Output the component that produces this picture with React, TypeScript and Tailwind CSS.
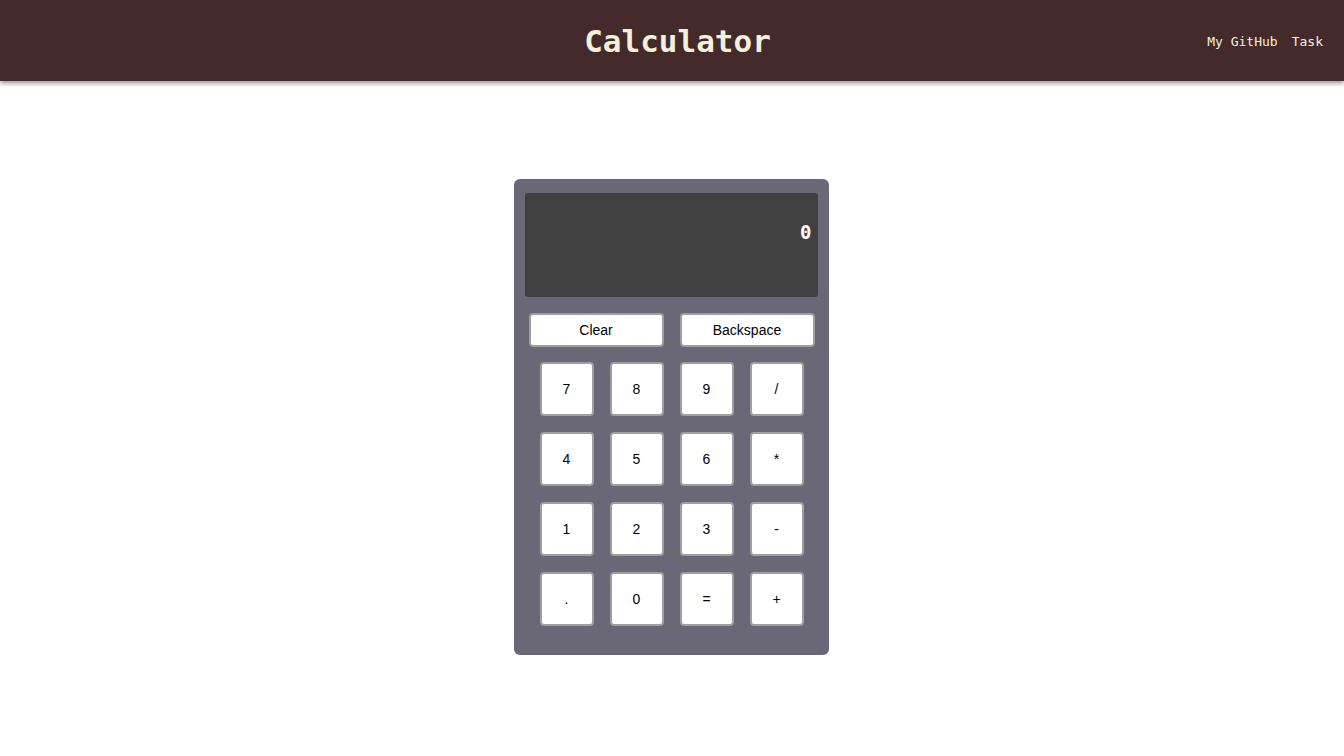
import React from "react";

const keys = ["7", "8", "9", "/", "4", "5", "6", "*", "1", "2", "3", "-", ".", "0", "=", "+"];

export default function App() {
  return (
    <div className="min-h-screen bg-white">
      <header className="relative h-[81px] bg-[#442a2a] shadow-[0_2px_5px_rgba(0,0,0,0.45)] flex items-center justify-center">
        <h1 className="pl-[11px] pt-[1px] text-[31px] font-bold text-[#f3f1dc] font-['DejaVu_Sans_Mono',monospace] leading-none">Calculator</h1>
        <nav className="absolute right-[21px] top-0 h-full flex items-center pt-[2px] gap-[14px] text-[13px] text-[#f3f1dc] font-['DejaVu_Sans_Mono',monospace]">
          <span>My GitHub</span>
          <span>Task</span>
        </nav>
      </header>
      <main className="flex justify-center pt-[98px] pr-[2px]">
        <div className="w-[315px] h-[476px] rounded-[6px] bg-[#6a6877] pt-[14px] px-[11px] pb-[29px]">
          <div className="h-[104px] rounded-[3px] bg-[#404040] flex justify-end pt-[27px] pr-[6px]">
            <span className="text-white font-bold text-[19px] leading-[24px] font-['DejaVu_Sans_Mono',monospace]">0</span>
          </div>
          <div className="mt-[16px] pl-[4px] flex gap-[16px]">
            <button className="w-[135px] h-[34px] pt-[1px] bg-white border-2 border-[#9f9f9f] rounded-[4px] text-[14px] text-black font-['Liberation_Sans',Arial,sans-serif]">Clear</button>
            <button className="w-[135px] h-[34px] pt-[1px] bg-white border-2 border-[#9f9f9f] rounded-[4px] text-[14px] text-black font-['Liberation_Sans',Arial,sans-serif]">Backspace</button>
          </div>
          <div className="mt-[15px] pl-[15px] grid grid-cols-[repeat(4,54px)] gap-[16px]">
            {keys.map((k) => (
              <button
                key={k}
                className="w-[54px] h-[54px] pt-[1px] bg-white border-2 border-[#9f9f9f] rounded-[4px] text-[14px] text-black font-['Liberation_Sans',Arial,sans-serif]"
              >
                {k}
              </button>
            ))}
          </div>
        </div>
      </main>
    </div>
  );
}
